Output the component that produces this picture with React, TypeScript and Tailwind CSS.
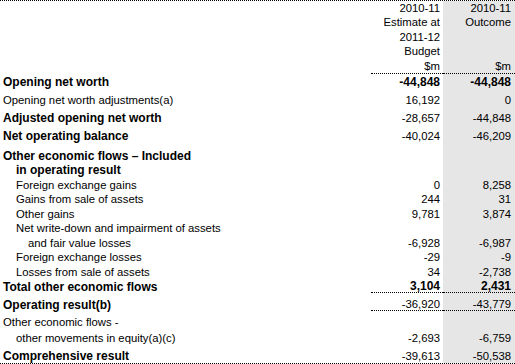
import React from "react";

type Row = {
  label: string;
  est?: string;
  out?: string;
  h: string;
  bold?: boolean;
  numBold?: boolean;
  indent?: string;
  rule?: boolean;
  pad?: string;
};

const rows: Row[] = [
  { label: "Opening net worth", est: "-44,848", out: "-44,848", h: "h-[14px]", bold: true, numBold: true },
  { label: "Opening net worth adjustments(a)", est: "16,192", out: "0", h: "h-[17.5px]" },
  { label: "Adjusted opening net worth", est: "-28,657", out: "-44,848", h: "h-[18.5px]", bold: true },
  { label: "Net operating balance", est: "-40,024", out: "-46,209", h: "h-[18px]", bold: true },
  { label: "Other economic flows \u2013 Included", h: "h-[19.5px]", bold: true },
  { label: "in operating result", h: "h-[14.5px]", bold: true, indent: "pl-[16px]" },
  { label: "Foreign exchange gains", est: "0", out: "8,258", h: "h-[14.5px]", indent: "pl-[16px]" },
  { label: "Gains from sale of assets", est: "244", out: "31", h: "h-[14.5px]", indent: "pl-[16px]" },
  { label: "Other gains", est: "9,781", out: "3,874", h: "h-[14.5px]", indent: "pl-[16px]" },
  { label: "Net write-down and impairment of assets", h: "h-[14.5px]", indent: "pl-[16px]" },
  { label: "and fair value losses", est: "-6,928", out: "-6,987", h: "h-[14.5px]", indent: "pl-[28px]" },
  { label: "Foreign exchange losses", est: "-29", out: "-9", h: "h-[14.5px]", indent: "pl-[16px]" },
  { label: "Losses from sale of assets", est: "34", out: "-2,738", h: "h-[14.5px]", indent: "pl-[16px]" },
  { label: "Total other economic flows", est: "3,104", out: "2,431", h: "h-[15.5px]", bold: true, numBold: true, rule: true },
  { label: "Operating result(b)", est: "-36,920", out: "-43,779", h: "h-[18px]", bold: true, rule: true },
  { label: "Other economic flows -", h: "h-[17px]" },
  { label: "other movements in equity(a)(c)", est: "-2,693", out: "-6,759", h: "h-[16px]", indent: "pl-[16px]" },
  { label: "Comprehensive result", est: "-39,613", out: "-50,538", h: "h-[19px]", bold: true, pad: "pb-[1px]" },
];

const head = [
  ["2010-11", "2010-11"],
  ["Estimate at", "Outcome"],
  ["2011-12", "\u00a0"],
  ["Budget", "\u00a0"],
  ["$m", "$m"],
];

export default function App() {
  return (
    <div className="w-[515px] h-[364px] bg-white text-black font-['Liberation_Sans',Arial,sans-serif] border-y border-dotted border-black">
      <div className="grid grid-cols-[371px_72px_72px] h-[73px]">
        <div />
        <div className="border-b border-dotted border-black pr-[3px] text-right text-[11.3px] leading-[14.4px]">
          {head.map((l) => (
            <div key={l[0] + "a"}>{l[0]}</div>
          ))}
        </div>
        <div className="border-b border-dotted border-black bg-[#e6e6e6] pr-[4px] text-right text-[11.3px] leading-[14.4px]">
          {head.map((l, i) => (
            <div key={i}>{l[1]}</div>
          ))}
        </div>
      </div>
      {rows.map((r) => {
        const num = r.numBold ? "font-bold text-[12px]" : "text-[11.3px]";
        const rule = r.rule ? "border-b border-dotted border-black" : "";
        return (
          <div key={r.label} className={`grid grid-cols-[371px_72px_72px] ${r.h}`}>
            <div
              className={`flex items-end leading-[12px] whitespace-nowrap ${r.indent ?? "pl-[3px]"} ${r.pad ?? ""} ${
                r.bold ? "font-bold text-[12px]" : "text-[11.3px]"
              }`}
            >
              {r.label}
            </div>
            <div className={`flex items-end justify-end pr-[3px] leading-[12px] ${num} ${rule} ${r.pad ?? ""}`}>
              {r.est}
            </div>
            <div className={`flex items-end justify-end pr-[4px] leading-[12px] bg-[#e6e6e6] ${num} ${rule} ${r.pad ?? ""}`}>
              {r.out}
            </div>
          </div>
        );
      })}
    </div>
  );
}
